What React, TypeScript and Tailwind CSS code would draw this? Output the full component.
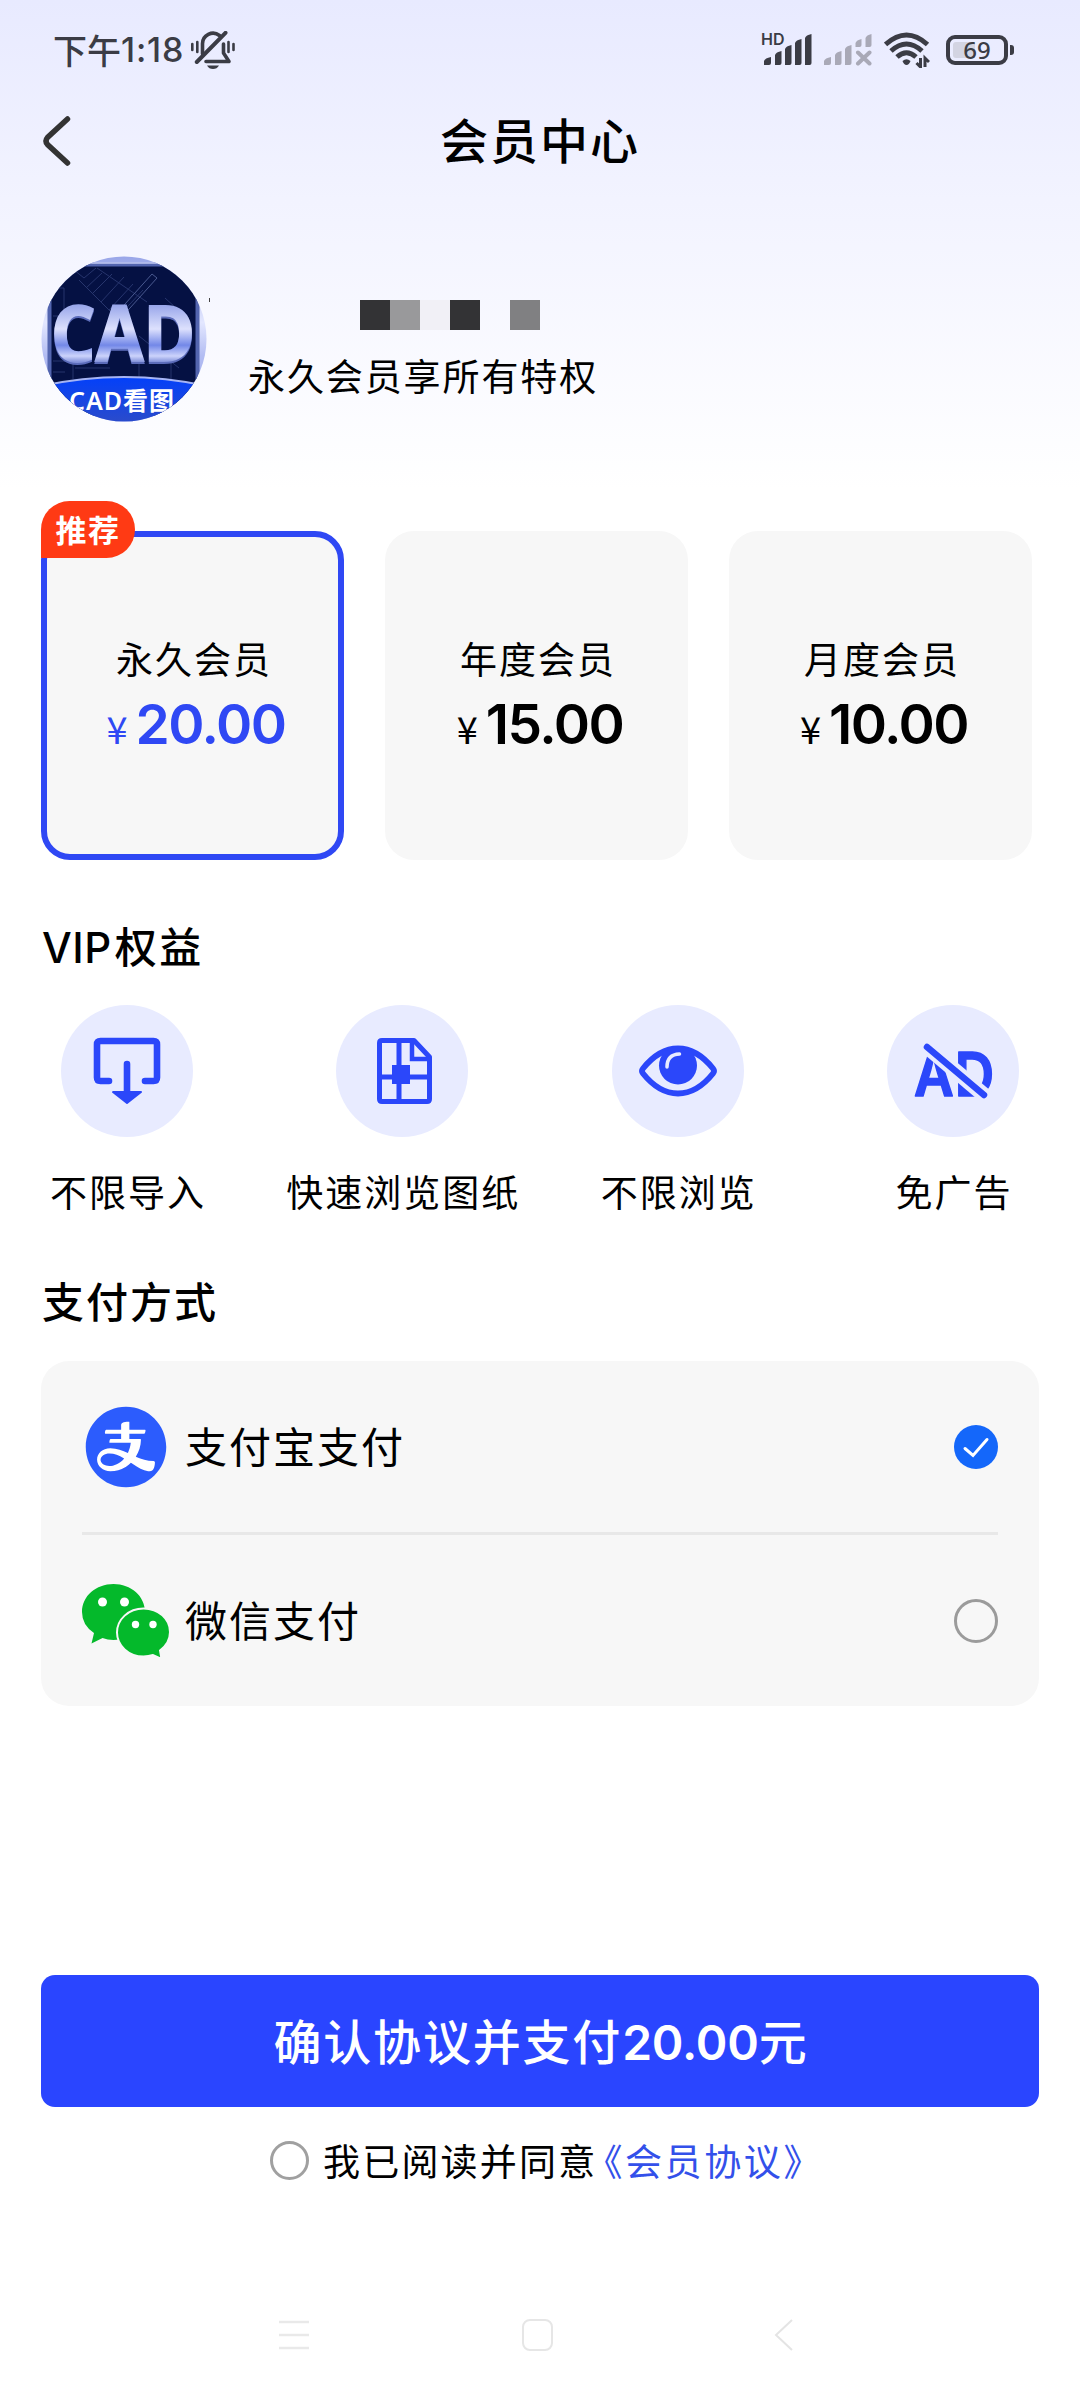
import React, { useState } from "react";
import { AiFillAlipayCircle } from "react-icons/ai";

interface Plan {
  id: string;
  name: string;
  price: string;
  recommended?: boolean;
}

interface PayMethod {
  id: string;
  name: string;
  icon: React.ReactNode;
}

const BellOffIcon: React.FC = () => (
  <svg width="44" height="38" viewBox="0 0 44 38" fill="none" stroke="#3b3c45" strokeLinecap="round">
    <path d="M1.3 13v6M6.3 11v10M37.5 11v10M42.5 13v6" strokeWidth="2.6" />
    <path d="M11.5 23V13a10.5 10.5 0 0 1 17-8.5" strokeWidth="3.6" />
    <path d="M32.5 13v9l5.5 8.5H15" strokeWidth="3.6" strokeLinejoin="round" />
    <path d="M5.8 31 34.5 1.8" strokeWidth="4" />
    <path d="M16 34.5h12q-2 3.5-6 3.5t-6-3.5z" fill="#3b3c45" stroke="none" />
  </svg>
);

const SignalIcon: React.FC = () => (
  <div className="relative h-[34px] w-[50px]">
    <span className="absolute -left-[1px] -top-[2px] font-['Inter'] text-[16px] font-semibold leading-4">HD</span>
    <svg width="50" height="34" viewBox="0 0 50 34" fill="#3b3c45">
      <path d="M2 32v-4q1-3 7-4v6q0 2-2 2z" />
      <path d="M13 32V22q1-3 6.500-4v12q0 2-2 2z" />
      <path d="M23 32V16q1-3 6.500-4v18q0 2-2 2z" />
      <path d="M33 32V10q1-3 6.500-4v24q0 2-2 2z" />
      <path d="M43 32V5q1-3 6.500-4v29q0 2-2 2z" />
    </svg>
  </div>
);

const NoSignalIcon: React.FC = () => (
  <svg width="48" height="34" viewBox="0 0 48 34" fill="#a9a9b7">
    <path d="M0 32v-4q1-3 7-4v6q0 2-2 2z" />
    <path d="M11 32V22q1-3 6.500-4v12q0 2-2 2z" />
    <path d="M21 32V16q1-3 6.500-4v18q0 2-2 2z" />
    <path d="M31.500 14V10q1-3 6-4v6q0 2-2 2z" />
    <path d="M41.500 14V5q1-3 6-4v11q0 2-2 2z" />
    <path d="M34 19.500 45.500 30.500M45.500 19.500 34 30.500" stroke="#a9a9b7" strokeWidth="4" strokeLinecap="round" />
  </svg>
);

const WifiIcon: React.FC = () => (
  <svg width="46" height="36" viewBox="0 0 46 36" fill="none" stroke="#3b3c45" strokeWidth="5">
    <path d="M1.500 12.500Q22.500-6.500 43.500 12.500" />
    <path d="M7 19Q22.500 5 38 19" />
    <path d="M13 25Q22.500 16.500 32 25" />
    <path d="M18.500 29q4-3.500 8 0-1.500 4-4 4t-4-4z" fill="#3b3c45" stroke="none" />
    <path d="M36.500 26v9l-4-4M41 35v-9l4 4" strokeWidth="3" />
  </svg>
);

const StatusBar: React.FC = () => (
  <div className="flex h-[100px] items-center pl-[53px] pr-[66px] text-[#3b3c45]">
    <span className="text-[34px] font-medium leading-none">下午</span>
    <span className="w-[59px] font-['Inter'] text-[34px] font-medium leading-none tracking-[0.8px]">1:18</span>
    <div className="ml-[11px]">
      <BellOffIcon />
    </div>
    <div className="ml-auto flex items-center">
      <SignalIcon />
      <div className="ml-3">
        <NoSignalIcon />
      </div>
      <div className="ml-3">
        <WifiIcon />
      </div>
      <div className="relative ml-4 flex h-[30px] w-[62px] items-center justify-center rounded-[9px] border-4 border-[#3b3c45]">
        <div className="absolute left-[3px] top-[3px] h-4 w-[22px] rounded-l-[3px] bg-[#d3d4e2]" />
        <span className="relative font-['Noto_Sans'] text-[24px] font-medium leading-none">69</span>
      </div>
      <div className="ml-[2px] h-[10px] w-1 rounded-r-[3px] bg-[#3b3c45]" />
    </div>
  </div>
);

const Header: React.FC = () => (
  <div className="relative flex h-[82px] items-start justify-center pt-[14px]">
    <svg className="absolute left-[41px] top-[14px]" width="32" height="54" viewBox="0 0 32 54">
      <path
        d="M26.500 5 6.500 23.500q-3 3.500 0 7L26.500 49"
        fill="none"
        stroke="#333"
        strokeWidth="5.500"
        strokeLinecap="round"
      />
    </svg>
    <h1 className="text-[48px] font-medium leading-[48px] tracking-[2px]">会员中心</h1>
  </div>
);

const Avatar: React.FC = () => (
  <svg width="166" height="166" viewBox="0 0 166 166">
    <defs>
      <clipPath id="avatarClip">
        <circle cx="83" cy="83" r="82.500" />
      </clipPath>
      <linearGradient id="frame" x1="0" y1="0" x2="0" y2="1">
        <stop offset="0" stopColor="#98a5e8" />
        <stop offset="0.400" stopColor="#e3e7ff" />
        <stop offset="0.600" stopColor="#b3bdf3" />
        <stop offset="1" stopColor="#8f9ce6" />
      </linearGradient>
      <linearGradient id="letters" x1="0" y1="46" x2="0" y2="106" gradientUnits="userSpaceOnUse">
        <stop offset="0" stopColor="#909fe8" />
        <stop offset="0.450" stopColor="#dde1fd" />
        <stop offset="0.720" stopColor="#7388e8" />
        <stop offset="0.900" stopColor="#ccd3fb" />
        <stop offset="1" stopColor="#8392da" />
      </linearGradient>
      <linearGradient id="banner" x1="0" y1="0" x2="0" y2="1">
        <stop offset="0" stopColor="#0340fa" />
        <stop offset="1" stopColor="#2a4bcb" />
      </linearGradient>
    </defs>
    <g clipPath="url(#avatarClip)">
      <rect width="166" height="166" fill="url(#frame)" />
      <rect x="8.500" y="8.500" width="148" height="150" fill="#051143" stroke="#5365af" strokeWidth="4" />
      <path d="M7 7h152" stroke="#c3cbf5" strokeWidth="1.500" />
      <g fill="none" stroke="#27356d" strokeWidth="1">
        <path d="M33 14l10 8 12-10M38 24l50 50M56 12l50 34M45 32l16-15M51 38l20-20M60 46l23-25M68 54l24-26M76 62l26-28" />
        <path d="M12 32h11v60M12 60h30M12 105h20v18M34 112h35M98 80l40 32M98 92v30M124 42l22 20M130 103v22M12 116h12" />
        <path d="M111 18l5 4-36 40-5-4z" stroke="#4a5a90" />
      </g>
      <text
        x="10"
        y="105"
        fontSize="77"
        fontWeight="700"
        fontFamily="'Open Sans', 'Noto Sans', sans-serif"
        textLength="144"
        lengthAdjust="spacingAndGlyphs"
        fill="url(#letters)"
        stroke="url(#letters)"
        strokeWidth="2"
        className="drop-shadow-[0_2px_0_#5c6cba]"
      >
        CAD
      </text>
      <path d="M0 130Q83 112 166 130V166H0z" fill="url(#banner)" stroke="#a6b4f4" strokeWidth="2" />
      <text
        x="28"
        y="154"
        fontSize="25"
        fontWeight="600"
        fontFamily="'Noto Sans', 'Noto Sans CJK SC', sans-serif"
        textLength="105"
        fill="#fff"
      >
        CAD看图
      </text>
    </g>
  </svg>
);

const Profile: React.FC = () => (
  <div className="flex h-[350px] items-start pl-[41px] pt-[74px]">
    <Avatar />
    <div className="ml-[2px] mt-[42px] h-1 w-px bg-[#444]" />
    <div className="ml-[38px] mt-[44px]">
      {/* the user id is masked */}
      <div className="ml-[112px] flex">
        <div className="h-[30px] w-[30px] bg-[#333335]" />
        <div className="h-[30px] w-[30px] bg-[#99999b]" />
        <div className="h-[30px] w-[30px] bg-[#f1f0f6]" />
        <div className="h-[30px] w-[30px] bg-[#333335]" />
        <div className="ml-[30px] h-[30px] w-[30px] bg-[#808082]" />
      </div>
      <p className="mt-[25px] text-[37px] leading-[40px] tracking-[1.9px]">永久会员享所有特权</p>
    </div>
  </div>
);

const PlanCard: React.FC<{ plan: Plan; selected: boolean; onSelect: () => void }> = ({
  plan,
  selected,
  onSelect,
}) => (
  <div
    onClick={onSelect}
    className={`relative flex h-[329px] w-[303px] flex-col items-center rounded-[29px] bg-[#f7f7f7] ${
      selected ? "border-[6px] border-[#2f48f4] pt-[101px]" : "pt-[107px]"
    }`}
  >
    {plan.recommended && (
      <div className="absolute left-[-6px] top-[-36px] flex h-[57px] w-[94px] items-center justify-center rounded-[29px] rounded-bl-none bg-[#ff3a14] text-[31px] font-bold tracking-[1.5px] text-white">
        推荐
      </div>
    )}
    <p className="pl-[3px] text-[37px] leading-[40px] tracking-[2px]">{plan.name}</p>
    <p className={`mt-[18px] flex items-baseline pl-[7px] leading-[56px] ${selected ? "text-[#2f48f4]" : ""}`}>
      <span className="mr-[8px] text-[38px]">¥</span>
      <span className="font-['Inter'] text-[55px] font-semibold tracking-[-1.5px]">{plan.price}</span>
    </p>
  </div>
);

const ImportIcon: React.FC = () => (
  <svg width="132" height="132" viewBox="0 0 132 132" fill="none" stroke="#2b47fa" strokeLinecap="round">
    <path d="M48 76H39.500q-3.500 0-3.500-3.500V39.500Q36 36 39.500 36h53q3.500 0 3.500 3.500v33q0 3.500-3.500 3.500H84M66 59v28" strokeWidth="6.600" />
    <path d="M52 87h28L66 98z" fill="#2b47fa" strokeWidth="2" strokeLinejoin="round" />
  </svg>
);

const DrawingIcon: React.FC = () => (
  <svg width="132" height="132" viewBox="0 0 132 132" fill="none" stroke="#2b47fa" strokeWidth="5" strokeLinejoin="round">
    <path d="M46 35.500H78L93.500 52V94q0 2.500-2.500 2.500H46q-2.500 0-2.500-2.500V38q0-2.500 2.500-2.500z" />
    <path d="M63 36v60M44 72h49" />
    <path d="M76 37v17h17" strokeWidth="4.500" strokeLinejoin="miter" />
    <path d="M56 60h18v19H56z" fill="#2b47fa" stroke="none" />
  </svg>
);

const EyeIcon: React.FC = () => (
  <svg width="132" height="132" viewBox="0 0 132 132" fill="none" stroke="#2b47fa">
    <path d="M31 63.500Q47 43.500 66 43.500t35 20q2 2.500 0 5Q85 88.500 66 88.500t-35-20q-2-2.500 0-5z" strokeWidth="5.800" />
    <circle cx="66" cy="60.500" r="19" fill="#2b47fa" stroke="none" />
    <path d="M55 62q0-12.500 12.500-13" stroke="#e8ebff" strokeWidth="3.500" strokeLinecap="round" />
  </svg>
);

const NoAdsIcon: React.FC = () => (
  <svg width="132" height="132" viewBox="0 0 132 132">
    <text
      x="27"
      y="90.500"
      fontFamily="Inter, sans-serif"
      fontSize="61"
      fontWeight="600"
      letterSpacing="1"
      textLength="81"
      lengthAdjust="spacingAndGlyphs"
      fill="#2b47fa"
      stroke="#2b47fa"
      strokeWidth="1.500"
      strokeLinejoin="round"
    >
      AD
    </text>
    <path d="M36 38.600 100 92.500" stroke="#e8ebff" strokeWidth="15" />
    <path d="M40 42 97 90" stroke="#2b47fa" strokeWidth="6.500" strokeLinecap="round" />
  </svg>
);

const WechatIcon: React.FC = () => (
  <svg className="mt-[3px]" width="88" height="76" viewBox="0 0 88 76" fill="#04b92b">
    <path d="M31.500 0C49 0 63 12 63 28S49 56 31.500 56q-6 0-11-2L9.500 59.500l2.500-10.500Q0 41 0 28C0 12 14 0 31.500 0z" />
    <path
      d="M61.500 24.500C76.500 24.500 88 35 88 48q0 11-10 18.500l1.500 8.500-8.500-4q-4.500 1.500-9.500 1.500C46.500 72.500 35 61.500 35 48.500s11.500-24 26.500-24z"
      stroke="#f7f7f7"
      strokeWidth="2"
    />
    <g fill="#fff">
      <circle cx="20.500" cy="18" r="4.500" />
      <circle cx="42.500" cy="18" r="4.500" />
      <circle cx="53.500" cy="40.500" r="3.700" />
      <circle cx="71" cy="40.500" r="3.700" />
    </g>
  </svg>
);

const AlipayIcon: React.FC = () => (
  <div className="relative h-[88px] w-[88px]">
    <div className="absolute left-2 top-2 h-[72px] w-[72px] rounded-full bg-white" />
    <AiFillAlipayCircle className="relative -left-[2px] -top-[2px] h-[92px] w-[92px] text-[#2c5cfd]" />
  </div>
);

const Radio: React.FC<{ checked: boolean }> = ({ checked }) =>
  checked ? (
    <svg width="44" height="44" viewBox="0 0 44 44">
      <circle cx="22" cy="22" r="22" fill="#1467fa" />
      <path d="M11 23.500 19 30.500 33 14.500" fill="none" stroke="#fff" strokeWidth="3" strokeLinecap="round" />
    </svg>
  ) : (
    <div className="h-11 w-11 rounded-full border-[3px] border-[#9b9b9b]" />
  );

const plans: Plan[] = [
  { id: "forever", name: "永久会员", price: "20.00", recommended: true },
  { id: "year", name: "年度会员", price: "15.00" },
  { id: "month", name: "月度会员", price: "10.00" },
];

const benefits = [
  { name: "不限导入", icon: <ImportIcon /> },
  { name: "快速浏览图纸", icon: <DrawingIcon /> },
  { name: "不限浏览", icon: <EyeIcon /> },
  { name: "免广告", icon: <NoAdsIcon /> },
];

const payMethods: PayMethod[] = [
  { id: "alipay", name: "支付宝支付", icon: <AlipayIcon /> },
  { id: "wechat", name: "微信支付", icon: <WechatIcon /> },
];

const NavigationBar: React.FC = () => (
  <div className="mt-auto flex h-[130px] items-center pl-[279px]">
    <svg width="30" height="32" viewBox="0 0 30 32" stroke="#e9e9e9" strokeWidth="2.500">
      <path d="M0 3h30M0 16h30M0 29h30" />
    </svg>
    <div className="ml-[213px] h-8 w-[31px] rounded-[8px] border-2 border-[#e6e6e6]" />
    <svg className="ml-[221px]" width="19" height="32" viewBox="0 0 19 32" fill="none" stroke="#e4e4e4" strokeWidth="2">
      <path d="M18 1 2 16 18 31" />
    </svg>
  </div>
);

const App: React.FC = () => {
  const [planId, setPlanId] = useState("forever");
  const [payId, setPayId] = useState("alipay");
  const [agreed, setAgreed] = useState(false);

  const currentPlan = plans.find((plan) => plan.id === planId) ?? plans[0];

  return (
    <div className="flex h-[2400px] w-[1080px] flex-col overflow-hidden bg-white bg-[linear-gradient(to_bottom,#e8eaff_0px,#f2f3ff_200px,#ffffff_490px)] font-['Noto_Sans_CJK_SC',sans-serif] text-black">
      <StatusBar />
      <Header />
      <Profile />

      <div className="-mt-px flex gap-[41px] pl-[41px]">
        {plans.map((plan) => (
          <PlanCard
            key={plan.id}
            plan={plan}
            selected={plan.id === planId}
            onSelect={() => setPlanId(plan.id)}
          />
        ))}
      </div>

      <h2 className="mt-[61px] h-[49px] pl-[42px] text-[42px] font-medium leading-[48px] tracking-[2.5px]">
        <span className="mr-[3px] font-['Inter'] tracking-[0.5px]">VIP</span>权益
      </h2>
      <div className="mt-[35px] flex justify-between px-[61px]">
        {benefits.map((benefit) => (
          <div key={benefit.name} className="flex w-[132px] flex-col items-center">
            <div className="h-[132px] w-[132px] rounded-full bg-[#e8ebff]">{benefit.icon}</div>
            <span className="mt-[34px] whitespace-nowrap pl-[2px] text-[37px] leading-[40px] tracking-[2px]">
              {benefit.name}
            </span>
          </div>
        ))}
      </div>

      <h2 className="mt-[65px] h-[51px] pl-[42px] text-[42px] font-medium leading-[48px] tracking-[2px]">支付方式</h2>
      <div className="mx-[41px] mt-[34px] h-[345px] rounded-[28px] bg-[#f7f7f7] px-[41px]">
        {payMethods.map((method, index) => (
          <div
            key={method.id}
            onClick={() => setPayId(method.id)}
            className={`flex items-center ${index > 0 ? "h-[174px] border-t-[3px] border-[#e8e8e8]" : "h-[171px]"}`}
          >
            {method.icon}
            <span className="-mt-[3px] ml-[15px] text-[42px] leading-none tracking-[2px]">{method.name}</span>
            <div className="ml-auto">
              <Radio checked={method.id === payId} />
            </div>
          </div>
        ))}
      </div>

      <button className="mx-[41px] mt-[269px] h-[132px] shrink-0 rounded-[14px] bg-[#2a45ff] pl-[2px] text-[48px] font-medium leading-none tracking-[1.8px] text-white">
        确认协议并支付<span className="font-['Inter'] font-semibold tracking-[-0.2px]">{currentPlan.price}</span>元
      </button>
      <div
        className="mt-[33px] flex items-center pl-[270px] text-[37px] leading-[40px] tracking-[2px]"
        onClick={() => setAgreed(!agreed)}
      >
        <div
          className={`mr-[14px] h-[39px] w-[39px] rounded-full border-[3px] border-[#a0a0a0] ${
            agreed ? "bg-[#1467fa]" : ""
          }`}
        />
        <span className="tracking-[2.2px]">我已阅读并同意</span>
        <span className="-ml-[12px] tracking-[2.6px] text-[#3350ea]">《会员协议》</span>
      </div>

      <NavigationBar />
    </div>
  );
};

export default App;
